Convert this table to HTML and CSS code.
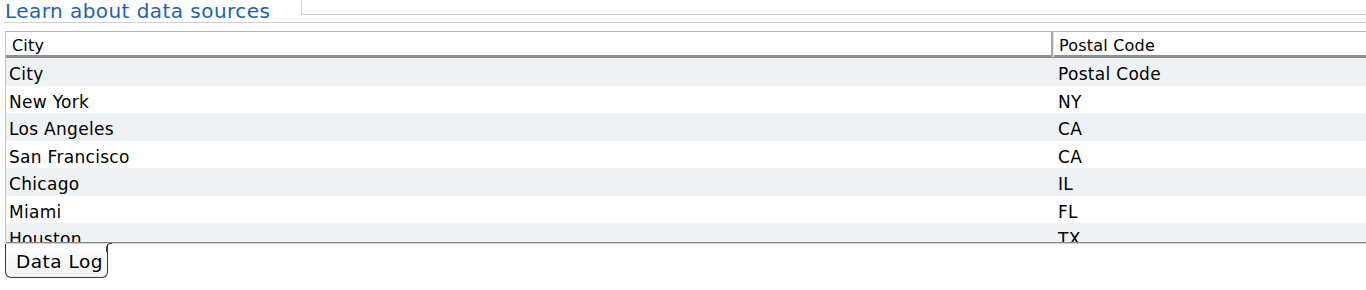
FILE: index.html
```html
<!DOCTYPE html>
<html>
<head>
<meta charset="utf-8">
<link rel="stylesheet" href="styles.css">
</head>
<body>
<div class="title-row">
  <a class="title">Learn about data sources</a>
  <div class="top-box"></div>
</div>
<div class="table">
  <div class="thead">
    <div class="th th-first">City</div>
    <div class="th">Postal Code</div>
  </div>
  <div class="tbody">
    <div class="tr alt"><div class="td">City</div><div class="td td2">Postal Code</div></div>
    <div class="tr"><div class="td">New York</div><div class="td td2">NY</div></div>
    <div class="tr alt"><div class="td">Los Angeles</div><div class="td td2">CA</div></div>
    <div class="tr"><div class="td">San Francisco</div><div class="td td2">CA</div></div>
    <div class="tr alt"><div class="td">Chicago</div><div class="td td2">IL</div></div>
    <div class="tr"><div class="td">Miami</div><div class="td td2">FL</div></div>
    <div class="tr alt"><div class="td">Houston</div><div class="td td2">TX</div></div>
  </div>
</div>
<div class="tabs">
  <div class="tab">Data Log</div>
</div>
</body>
</html>
```
FILE: styles.css
```css
html, body {
  margin: 0;
  padding: 0;
  background: #ffffff;
}
body {
  width: 1366px;
  height: 290px;
  overflow: hidden;
  font-family: "DejaVu Sans", "Liberation Sans", sans-serif;
  color: #000;
}
.title-row {
  display: flex;
  align-items: flex-start;
  height: 22px;
  margin-left: 4px;
  border-bottom: 1px solid #cfcfcf;
}
.title {
  font-size: 20px;
  letter-spacing: 0.45px;
  line-height: 22px;
  color: #1b63b2;
  padding-left: 1px;
  margin-top: 0;
}
.top-box {
  margin-left: 31px;
  flex: 1;
  border-left: 1px solid #cfcfcf;
  border-bottom: 1px solid #cfcfcf;
  box-sizing: border-box;
  height: 15px;
}
.table {
  margin-top: 8px;
  margin-left: 5px;
  border-left: 1px solid #c4c4c4;
  border-top: 1px solid #b4b4b4;
}
.thead {
  display: grid;
  grid-template-columns: 1047px 1fr;
  height: 23px;
  border-bottom: 3px solid #8d8d8d;
  box-shadow: 0 1px 0 #c8c8c8;
  background: #fff;
}
.th {
  font-size: 16px;
  letter-spacing: 0.2px;
  line-height: 22px;
  padding-left: 6px;
  padding-top: 3px;
}
.th-first {
  border-right: 2px solid #a8a8a8;
  box-shadow: 1px 0 0 #e0e0e0;
}
.tbody {
  height: 184px;
  overflow: hidden;
  border-bottom: 1px solid #8a8a8a;
  box-shadow: 0 1px 0 #cfcfcf;
}
.tr {
  display: grid;
  grid-template-columns: 1049px 1fr;
  height: 27.5px;
  background: #ffffff;
}
.tr.alt {
  background: #eef2f5;
}
.td {
  font-size: 17px;
  letter-spacing: 0.3px;
  line-height: 27.5px;
  padding-left: 3px;
  padding-top: 3px;
  white-space: nowrap;
}
.tabs {
  display: flex;
  margin-left: 5px;
  margin-top: 1px;
}
.tab {
  position: relative;
  width: 103px;
  height: 34px;
  box-sizing: border-box;
  border: 1px solid #3a3a3a;
  border-top: none;
  border-radius: 0 0 6px 6px;
  background: linear-gradient(#ffffff, #f1f1f1);
  font-size: 18.5px;
  letter-spacing: 0.5px;
  padding-left: 10px;
  padding-top: 7px;
}
.tab::after {
  content: "";
  position: absolute;
  right: -5px;
  top: -1px;
  width: 5px;
  height: 8px;
  border-left: 1px solid #3a3a3a;
  border-top: 1px solid #3a3a3a;
  border-radius: 5px 0 0 0;
}
```
